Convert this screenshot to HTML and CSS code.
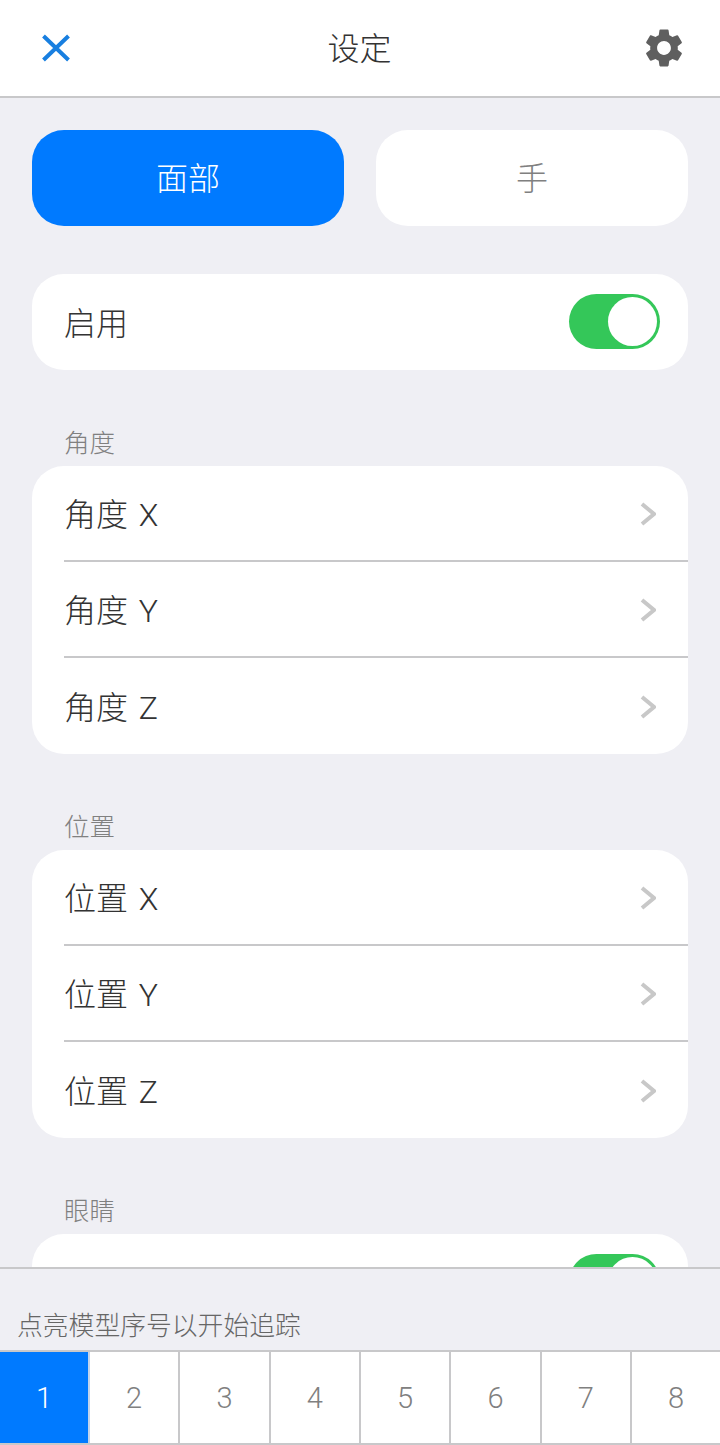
FILE: index.html
```html
<!DOCTYPE html>
<html lang="zh">
<head>
  <meta charset="UTF-8">
  <meta name="viewport" content="width=device-width, initial-scale=1.0">
  <title>设定</title>
  <link rel="stylesheet" href="styles.css">
</head>
<body>
  <div class="header">
    <svg class="close-icon" viewBox="0 0 32 32"><path d="M3.5 4 L28.5 28 M28.5 4 L3.5 28"/></svg>
    <h2>设定</h2>
    <svg class="gear-icon" viewBox="0 0 24 24"><path d="M19.14 12.94c.04-.3.06-.61.06-.94 0-.32-.02-.64-.07-.94l2.03-1.58a.49.49 0 0 0 .12-.61l-1.92-3.32a.488.488 0 0 0-.59-.22l-2.39.96c-.5-.38-1.03-.7-1.62-.94l-.36-2.54a.484.484 0 0 0-.48-.41h-3.84c-.24 0-.43.17-.47.41l-.36 2.54c-.59.24-1.13.57-1.62.94l-2.39-.96c-.22-.08-.47 0-.59.22L2.74 8.87c-.12.21-.08.47.12.61l2.03 1.58c-.05.3-.09.63-.09.94s.02.64.07.94l-2.03 1.58a.49.49 0 0 0-.12.61l1.92 3.32c.12.22.37.29.59.22l2.39-.96c.5.38 1.03.7 1.62.94l.36 2.54c.05.24.24.41.48.41h3.84c.24 0 .44-.17.47-.41l.36-2.54c.59-.24 1.13-.56 1.62-.94l2.39.96c.22.08.47 0 .59-.22l1.92-3.32c.12-.22.07-.47-.12-.61l-2.01-1.58zM12 15.6c-1.98 0-3.6-1.62-3.6-3.6s1.62-3.6 3.6-3.6 3.6 1.62 3.6 3.6-1.62 3.6-3.6 3.6z"/></svg>
  </div>

  <div class="content">
    <div class="tabs">
      <div class="tab active"><span>面部</span></div>
      <div class="tab"><span>手</span></div>
    </div>

    <div class="card">
      <div class="row">
        <span>启用</span>
        <div class="toggle"><div class="knob"></div></div>
      </div>
    </div>

    <div class="group-label">角度</div>
    <div class="card">
      <div class="row line">
        <span>角度 X</span>
        <svg class="chevron" viewBox="0 0 16 24"><path d="M2 2 L14 12 L2 22"/></svg>
      </div>
      <div class="row line">
        <span>角度 Y</span>
        <svg class="chevron" viewBox="0 0 16 24"><path d="M2 2 L14 12 L2 22"/></svg>
      </div>
      <div class="row">
        <span>角度 Z</span>
        <svg class="chevron" viewBox="0 0 16 24"><path d="M2 2 L14 12 L2 22"/></svg>
      </div>
    </div>

    <div class="group-label">位置</div>
    <div class="card">
      <div class="row line">
        <span>位置 X</span>
        <svg class="chevron" viewBox="0 0 16 24"><path d="M2 2 L14 12 L2 22"/></svg>
      </div>
      <div class="row line">
        <span>位置 Y</span>
        <svg class="chevron" viewBox="0 0 16 24"><path d="M2 2 L14 12 L2 22"/></svg>
      </div>
      <div class="row">
        <span>位置 Z</span>
        <svg class="chevron" viewBox="0 0 16 24"><path d="M2 2 L14 12 L2 22"/></svg>
      </div>
    </div>

    <div class="group-label">眼睛</div>
    <div class="card">
      <div class="row">
        <span></span>
        <div class="toggle"><div class="knob"></div></div>
      </div>
    </div>
  </div>

  <div class="footer">
    <p class="footer-text">点亮模型序号以开始追踪</p>
    <div class="numbers">
      <div class="num active">1</div>
      <div class="num">2</div>
      <div class="num">3</div>
      <div class="num">4</div>
      <div class="num">5</div>
      <div class="num">6</div>
      <div class="num">7</div>
      <div class="num">8</div>
    </div>
  </div>
</body>
</html>
```

FILE: styles.css
```css
* {
  box-sizing: border-box;
}

html, body {
  margin: 0;
  height: 1445px;
  overflow: hidden;
}

body {
  display: flex;
  flex-direction: column;
  background-color: #efeff4;
  font-family: Roboto, "Noto Sans CJK SC", sans-serif;
  color: #333;
}

.header {
  flex: none;
  height: 98px;
  padding: 0 33px 0 32px;
  display: flex;
  align-items: center;
  justify-content: space-between;
  background-color: #fff;
  border-bottom: 2px solid #c8c8ca;
}

.header h2 {
  margin: 2px 0 0 6px;
  font-size: 32px;
  font-weight: 300;
  line-height: 40px;
}

.close-icon {
  width: 32px;
  height: 32px;
  margin-left: 8px;
  fill: none;
  stroke: #187fe0;
  stroke-width: 4;
}

.gear-icon {
  width: 46px;
  height: 46px;
  fill: #5f5f5f;
}

.content {
  flex: 1;
  min-height: 0;
  overflow: hidden;
  padding: 32px 32px 0;
}

.tabs {
  display: flex;
  gap: 32px;
  margin-bottom: 48px;
}

.tab {
  flex: 1;
  height: 96px;
  display: flex;
  align-items: center;
  justify-content: center;
  border-radius: 32px;
  background-color: #fff;
  color: #808080;
  font-size: 32px;
  font-weight: 300;
}

.tab span {
  margin-bottom: 4px;
}

.tab.active {
  background-color: #007aff;
  color: #fff;
}

.card {
  background-color: #fff;
  border-radius: 32px;
  overflow: hidden;
}

.row {
  height: 96px;
  margin-left: 32px;
  padding-right: 28px;
  display: flex;
  align-items: center;
  justify-content: space-between;
  font-size: 32px;
  font-weight: 300;
  word-spacing: 3px;
}

.row span {
  margin-bottom: 3px;
}

.row.line {
  border-bottom: 2px solid #c8c8ca;
}

.group-label {
  height: 40px;
  margin: 53px 0 3px 32px;
  line-height: 40px;
  font-size: 25.5px;
  font-weight: 300;
  color: #808080;
}

.chevron {
  width: 16px;
  height: 24px;
  margin: 2px 4px 0 0;
  fill: none;
  stroke: #c8c8c8;
  stroke-width: 4;
}

.toggle {
  width: 91px;
  height: 55px;
  margin-bottom: 2px;
  padding: 3px;
  display: flex;
  justify-content: flex-end;
  border-radius: 28px;
  background-color: #34c759;
}

.knob {
  width: 49px;
  height: 49px;
  border-radius: 50%;
  background-color: #fff;
}

.footer {
  flex: none;
  height: 178px;
  border-top: 2px solid #c8c8ca;
  background-color: #efeff4;
}

.footer-text {
  margin: 0;
  padding: 37px 0 0 17px;
  height: 81px;
  line-height: 40px;
  font-size: 25.8px;
  font-weight: 300;
  color: #666;
}

.numbers {
  display: grid;
  grid-template-columns: 90px repeat(6, 90.33px) 1fr;
  height: 95px;
  border-top: 2px solid #c8c8ca;
  border-bottom: 2px solid #c8c8ca;
  background-color: #fff;
}

.num {
  display: flex;
  align-items: center;
  justify-content: center;
  border-right: 2px solid #c8c8ca;
  font-size: 29px;
  font-weight: 300;
  color: #808080;
}

.num:last-child {
  border-right: none;
}

.num.active {
  border-right: 2px solid #c3d3ea;
  background-color: #007aff;
  color: #fff;
}
```
